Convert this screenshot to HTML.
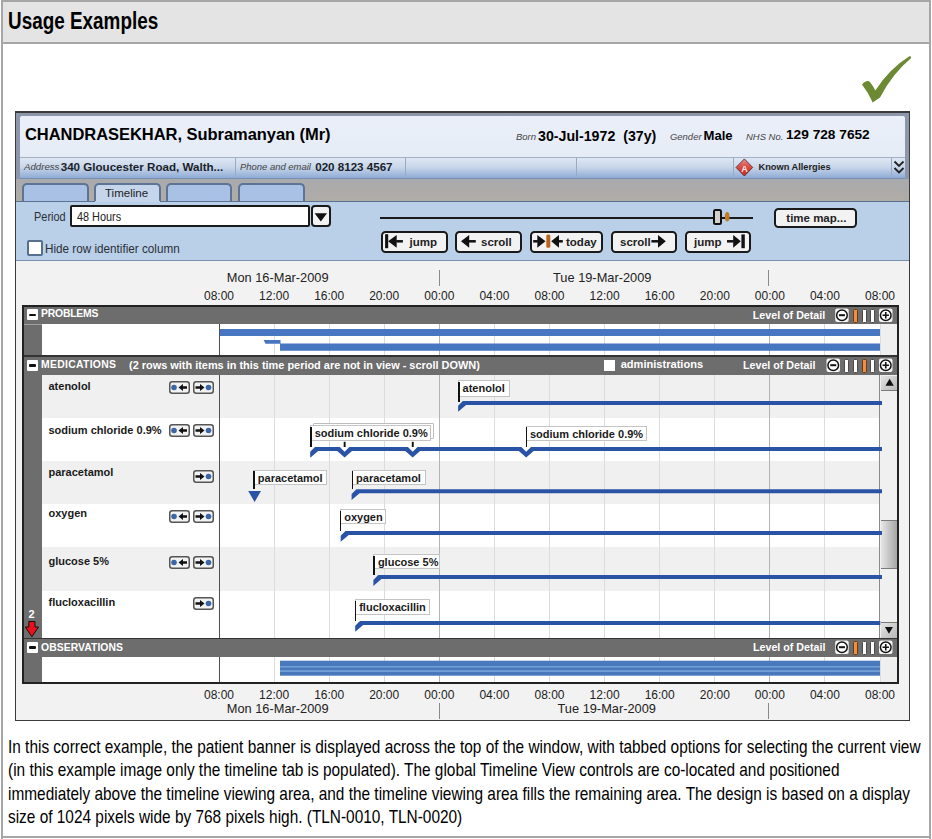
<!DOCTYPE html>
<html><head><meta charset="utf-8">
<style>
*{margin:0;padding:0;box-sizing:border-box}
html,body{width:932px;height:839px;overflow:hidden;background:#fff;font-family:"Liberation Sans",sans-serif;color:#000}
.a{position:absolute}
.t{position:absolute;white-space:nowrap;line-height:1}
.b{font-weight:bold}
.i{font-style:italic}
</style></head><body>
<!-- page frame -->
<div class="a" style="left:1px;top:0;width:930px;height:839px;border:2px solid #a6a6a6;border-bottom:none"></div>
<div class="a" style="left:1px;top:836px;width:930px;height:2px;background:#a6a6a6"></div>
<div class="a" style="left:3px;top:2px;width:926px;height:40px;background:#e4e4e4"></div>
<div class="a" style="left:3px;top:42px;width:926px;height:2px;background:#a6a6a6"></div>
<div class="t b" style="left:8.3px;top:8.5px;font-size:24.8px;transform:scaleX(0.762);transform-origin:0 0">Usage Examples</div>

<!-- checkmark -->
<svg class="a" style="left:850px;top:45px" width="70" height="65" viewBox="850 45 70 65">
<path d="M862 84.5 Q865 80.5 868.5 81 Q871 82 875.3 90.5 Q889 69 909.3 56.2 Q911.8 55.8 911 58.3 Q893 73 880 97.4 L872.7 102.5 Q868 92 862 84.5Z" fill="#6c8a33"/>
</svg>

<!-- main panel -->
<div class="a" style="left:15px;top:111px;width:895px;height:610px;background:#f0f0f0;border:1px solid #3a3a3a;border-top-width:2px"></div>
<!-- banner outer gray-blue -->
<div class="a" style="left:16px;top:113px;width:893px;height:66px;background:#8e97a9"></div>
<div class="a" style="left:20px;top:116px;width:885px;height:41px;background:linear-gradient(#eaeff9,#e6ecf6);border-radius:2px 2px 0 0"></div>
<div class="t b" style="left:25px;top:126px;font-size:16.5px;letter-spacing:-0.05px">CHANDRASEKHAR, Subramanyan (Mr)</div>
<div class="t i" style="left:515.5px;top:131.7px;font-size:9.8px;transform:scaleX(0.97);transform-origin:0 0;color:#444">Born</div>
<div class="t b" style="left:538px;top:128.5px;font-size:14.2px">30-Jul-1972&nbsp; (37y)</div>
<div class="t i" style="left:670px;top:131.7px;font-size:9.8px;transform:scaleX(0.965);transform-origin:0 0;color:#444">Gender</div>
<div class="t b" style="left:703.5px;top:128.9px;font-size:13.1px">Male</div>
<div class="t i" style="left:746px;top:131.7px;font-size:9.8px;transform:scaleX(0.965);transform-origin:0 0;color:#444">NHS No.</div>
<div class="t b" style="left:786px;top:128.4px;font-size:13.7px">129 728 7652</div>

<!-- address row -->
<div class="a" style="left:20px;top:157px;width:885px;height:22px;background:linear-gradient(#dde7f3,#c9d7ea 45%,#8fabd6);border-top:1px solid #a3b0c6;border-bottom:1px solid #7890b0"></div>
<div class="a" style="left:235px;top:158px;width:1px;height:20px;background:#9aaac2"></div>
<div class="a" style="left:405px;top:158px;width:1px;height:20px;background:#9aaac2"></div>
<div class="a" style="left:576px;top:158px;width:1px;height:20px;background:#9aaac2"></div>
<div class="a" style="left:733px;top:158px;width:1px;height:20px;background:#9aaac2"></div>
<div class="a" style="left:891px;top:158px;width:1px;height:20px;background:#9aaac2"></div>
<div class="t i" style="left:24.3px;top:162.2px;font-size:9.8px;transform:scaleX(0.985);transform-origin:0 0;color:#444">Address</div>
<div class="t b" style="left:60.7px;top:160.8px;font-size:11.6px;color:#1a1f2a">340 Gloucester Road, Walth...</div>
<div class="t i" style="left:240.2px;top:162.2px;font-size:9.8px;transform:scaleX(0.965);transform-origin:0 0;color:#444">Phone and email</div>
<div class="t b" style="left:315.2px;top:160.8px;font-size:11.6px;color:#1a1f2a">020 8123 4567</div>
<svg class="a" style="left:0;top:0" width="932" height="839"><defs><linearGradient id="dg" x1="0" y1="0" x2="0" y2="1"><stop offset="0" stop-color="#e88a8a"/><stop offset="0.55" stop-color="#d8443a"/><stop offset="1" stop-color="#d12a1c"/></linearGradient></defs>
<path d="M744.4 158.9 L752.7 167.4 L744.4 176 L736 167.4Z" fill="url(#dg)" stroke="#5a3030" stroke-width="0.9"/>
<text x="744.4" y="171.6" font-family="Liberation Sans" font-weight="bold" font-size="9" fill="#fbe6e6" text-anchor="middle">A</text>
</svg>
<div class="t b" style="left:758.5px;top:163px;font-size:9.25px;color:#222">Known Allergies</div>
<svg class="a" style="left:893px;top:160px" width="12" height="15" viewBox="0 0 12 15">
<path d="M1.5 1.5 L6 6 L10.5 1.5 M1.5 8 L6 12.5 L10.5 8" fill="none" stroke="#222" stroke-width="1.8"/>
</svg>

<!-- tab strip -->
<div class="a" style="left:16px;top:179px;width:893px;height:22px;background:linear-gradient(#a9aaae,#b0aca6)"></div>
<div class="a" style="left:22px;top:183.3px;width:67px;height:18.7px;background:#a8c1e4;border:2px solid #5d7494;border-bottom:none;border-radius:5px 5px 0 0"></div>
<div class="a" style="left:94px;top:183.3px;width:67px;height:18.7px;background:#c4d5ec;border:2px solid #5d7494;border-bottom:none;border-radius:5px 5px 0 0"></div>
<div class="a" style="left:166px;top:183.3px;width:66px;height:18.7px;background:#a8c1e4;border:2px solid #5d7494;border-bottom:none;border-radius:5px 5px 0 0"></div>
<div class="a" style="left:238px;top:183.3px;width:67px;height:18.7px;background:#a8c1e4;border:2px solid #5d7494;border-bottom:none;border-radius:5px 5px 0 0"></div>
<div class="t" style="left:105px;top:187.8px;font-size:11.5px;color:#222">Timeline</div>

<!-- control panel -->
<div class="a" style="left:16px;top:201px;width:893px;height:60px;background:#bacfe8;border-top:1px solid #5a7090;border-bottom:1px solid #7a90b0"></div>
<div class="a" style="left:95px;top:201px;width:65px;height:1px;background:#c4d5ec"></div>
<div class="t" style="left:34.2px;top:212px;font-size:11.9px;transform:scaleX(0.92);transform-origin:0 0;color:#2a3038">Period</div>
<div class="a" style="left:69.8px;top:205.2px;width:240.2px;height:21.4px;background:#fff;border:2px solid #1a1a1a;border-radius:2px"></div>
<div class="t" style="left:77.2px;top:212px;font-size:11.9px;transform:scaleX(0.915);transform-origin:0 0;color:#222">48 Hours</div>
<div class="a" style="left:311px;top:205.2px;width:19.5px;height:21.8px;background:#f2f2f2;border:2px solid #1a1a1a;border-radius:4px"></div>
<svg class="a" style="left:0;top:0" width="932" height="839"><path d="M314.6 213.2 L327 213.2 L320.8 221.6Z" fill="#111"/></svg>
<div class="a" style="left:27px;top:240px;width:16px;height:16px;background:#fff;border:2px solid #56708f;border-radius:2px"></div>
<div class="t" style="left:45.3px;top:243.3px;font-size:12.1px;transform:scaleX(0.968);transform-origin:0 0;color:#2a3038">Hide row identifier column</div>

<!-- slider -->
<div class="a" style="left:380px;top:216.5px;width:373px;height:2px;background:#1a1a1a"></div>
<div class="a" style="left:713px;top:209.3px;width:9px;height:15.3px;background:#d4d0cc;border:2px solid #111;border-radius:2.5px"></div>
<svg class="a" style="left:0;top:0" width="932" height="839"><ellipse cx="727.2" cy="216.7" rx="2.3" ry="4.7" fill="#c47a1e"/></svg>
<!-- time map -->
<div class="a" style="left:774.2px;top:207.9px;width:82.7px;height:20.5px;background:#f2f2f2;border:2px solid #1a1a1a;border-radius:4.5px"></div>
<div class="t b" style="left:786.3px;top:213px;font-size:11.5px;color:#222">time map...</div>

<!-- nav buttons -->
<div class="a" style="left:381px;top:231px;width:67px;height:22px;background:#f2f2f2;border:2px solid #1a1a1a;border-radius:4.5px"></div>
<div class="a" style="left:455px;top:231px;width:67px;height:22px;background:#f2f2f2;border:2px solid #1a1a1a;border-radius:4.5px"></div>
<div class="a" style="left:529.5px;top:231px;width:73px;height:22px;background:#f2f2f2;border:2px solid #1a1a1a;border-radius:4.5px"></div>
<div class="a" style="left:610.5px;top:231px;width:66px;height:22px;background:#f2f2f2;border:2px solid #1a1a1a;border-radius:4.5px"></div>
<div class="a" style="left:684.5px;top:231px;width:66px;height:22px;background:#f2f2f2;border:2px solid #1a1a1a;border-radius:4.5px"></div>
<svg class="a" style="left:0;top:0" width="932" height="839"><rect x="385.1" y="234.2" width="3.1" height="14" fill="#111"/><path d="M388.1 241.3 L396.7 234.9 L396.7 247.70000000000002Z" fill="#111"/><rect x="396.2" y="240.05" width="6.699999999999989" height="2.5" fill="#111"/><path d="M461 241.3 L469.2 234.9 L469.2 247.70000000000002Z" fill="#111"/><rect x="468.7" y="240.05" width="7.100000000000023" height="2.5" fill="#111"/><path d="M545.5 241.3 L537.3 234.9 L537.3 247.70000000000002Z" fill="#111"/><rect x="533.2" y="240.05" width="4.599999999999909" height="2.5" fill="#111"/><rect x="546.3" y="234.4" width="4" height="13.3" rx="1.5" fill="#b8661e"/><path d="M551.2 241.3 L559 234.9 L559 247.70000000000002Z" fill="#111"/><rect x="558.5" y="240.05" width="4.2999999999999545" height="2.5" fill="#111"/><path d="M665.8 241.3 L658 234.9 L658 247.70000000000002Z" fill="#111"/><rect x="651.4" y="240.05" width="7.100000000000023" height="2.5" fill="#111"/><path d="M740.8 241.3 L733.2 234.9 L733.2 247.70000000000002Z" fill="#111"/><rect x="727" y="240.05" width="6.7000000000000455" height="2.5" fill="#111"/><rect x="741.4" y="234.4" width="3.4" height="13.8" fill="#111"/></svg>
<div class="t b" style="left:409.5px;top:236.8px;font-size:11.5px;color:#222">jump</div>
<div class="t b" style="left:481px;top:236.8px;font-size:11.5px;color:#222">scroll</div>
<div class="t b" style="left:566px;top:236.8px;font-size:11.5px;color:#222">today</div>
<div class="t b" style="left:620px;top:236.8px;font-size:11.5px;color:#222">scroll</div>
<div class="t b" style="left:694px;top:236.8px;font-size:11.5px;color:#222">jump</div>

<!-- TIMELINE -->
<div class="a" style="left:16px;top:261px;width:893px;height:459px;background:#f2f2f2"></div>
<div class="t" style="left:226.8px;top:272.3px;font-size:12.8px;color:#222">Mon 16-Mar-2009</div>
<div class="t" style="left:553px;top:272.3px;font-size:12.8px;color:#222">Tue 19-Mar-2009</div>
<div class="a" style="left:439px;top:270px;width:1px;height:16px;background:#8a8a8a"></div>
<div class="a" style="left:768px;top:270px;width:1px;height:16px;background:#8a8a8a"></div>
<div class="t" style="left:199.0px;width:40px;text-align:center;top:289.5px;font-size:12px;color:#222">08:00</div>
<div class="t" style="left:254.1px;width:40px;text-align:center;top:289.5px;font-size:12px;color:#222">12:00</div>
<div class="t" style="left:309.2px;width:40px;text-align:center;top:289.5px;font-size:12px;color:#222">16:00</div>
<div class="t" style="left:364.2px;width:40px;text-align:center;top:289.5px;font-size:12px;color:#222">20:00</div>
<div class="t" style="left:419.3px;width:40px;text-align:center;top:289.5px;font-size:12px;color:#222">00:00</div>
<div class="t" style="left:474.4px;width:40px;text-align:center;top:289.5px;font-size:12px;color:#222">04:00</div>
<div class="t" style="left:529.5px;width:40px;text-align:center;top:289.5px;font-size:12px;color:#222">08:00</div>
<div class="t" style="left:584.6px;width:40px;text-align:center;top:289.5px;font-size:12px;color:#222">12:00</div>
<div class="t" style="left:639.7px;width:40px;text-align:center;top:289.5px;font-size:12px;color:#222">16:00</div>
<div class="t" style="left:694.8px;width:40px;text-align:center;top:289.5px;font-size:12px;color:#222">20:00</div>
<div class="t" style="left:749.8px;width:40px;text-align:center;top:289.5px;font-size:12px;color:#222">00:00</div>
<div class="t" style="left:804.9px;width:40px;text-align:center;top:289.5px;font-size:12px;color:#222">04:00</div>
<div class="t" style="left:860.0px;width:40px;text-align:center;top:289.5px;font-size:12px;color:#222">08:00</div>
<div class="t" style="left:226.8px;top:703.0px;font-size:12.8px;color:#222">Mon 16-Mar-2009</div>
<div class="t" style="left:557.5px;top:703.0px;font-size:12.8px;color:#222">Tue 19-Mar-2009</div>
<div class="a" style="left:439px;top:703px;width:1px;height:16px;background:#8a8a8a"></div>
<div class="a" style="left:768px;top:703px;width:1px;height:16px;background:#8a8a8a"></div>
<div class="t" style="left:199.0px;width:40px;text-align:center;top:688.5px;font-size:12px;color:#222">08:00</div>
<div class="t" style="left:254.1px;width:40px;text-align:center;top:688.5px;font-size:12px;color:#222">12:00</div>
<div class="t" style="left:309.2px;width:40px;text-align:center;top:688.5px;font-size:12px;color:#222">16:00</div>
<div class="t" style="left:364.2px;width:40px;text-align:center;top:688.5px;font-size:12px;color:#222">20:00</div>
<div class="t" style="left:419.3px;width:40px;text-align:center;top:688.5px;font-size:12px;color:#222">00:00</div>
<div class="t" style="left:474.4px;width:40px;text-align:center;top:688.5px;font-size:12px;color:#222">04:00</div>
<div class="t" style="left:529.5px;width:40px;text-align:center;top:688.5px;font-size:12px;color:#222">08:00</div>
<div class="t" style="left:584.6px;width:40px;text-align:center;top:688.5px;font-size:12px;color:#222">12:00</div>
<div class="t" style="left:639.7px;width:40px;text-align:center;top:688.5px;font-size:12px;color:#222">16:00</div>
<div class="t" style="left:694.8px;width:40px;text-align:center;top:688.5px;font-size:12px;color:#222">20:00</div>
<div class="t" style="left:749.8px;width:40px;text-align:center;top:688.5px;font-size:12px;color:#222">00:00</div>
<div class="t" style="left:804.9px;width:40px;text-align:center;top:688.5px;font-size:12px;color:#222">04:00</div>
<div class="t" style="left:860.0px;width:40px;text-align:center;top:688.5px;font-size:12px;color:#222">08:00</div>
<div class="a" style="left:22px;top:305px;width:877px;height:379px;background:#6d6d6d;border:2px solid #222"></div>
<div class="a" style="left:24px;top:307px;width:873px;height:17px;background:#6d6d6d"></div>
<div class="a" style="left:27.3px;top:309.2px;width:10.8px;height:10.8px;background:#fff;border-radius:1px"></div>
<div class="a" style="left:29.2px;top:313.59999999999997px;width:7.2px;height:2.2px;background:#111;border-radius:1px"></div>
<div class="t b" style="left:41px;top:309.2px;font-size:10.4px;letter-spacing:-0.2px;color:#fff">PROBLEMS</div>

<div class="a" style="left:24px;top:324px;width:18px;height:1px;background:#a0a0a0"></div>
<div class="a" style="left:42px;top:324px;width:838px;height:31px;background:#fff"></div>
<div class="a" style="left:880px;top:324px;width:17px;height:31px;background:#efefef;border-left:1px solid #ddd"></div>
<div class="a" style="left:24px;top:355px;width:873px;height:2px;background:#333"></div>
<div class="a" style="left:24px;top:357px;width:873px;height:18px;background:#6d6d6d"></div>
<div class="a" style="left:27.3px;top:360px;width:10.8px;height:10.8px;background:#fff;border-radius:1px"></div>
<div class="a" style="left:29.2px;top:364.4px;width:7.2px;height:2.2px;background:#111;border-radius:1px"></div>
<div class="t b" style="left:41px;top:360.4px;font-size:10.4px;letter-spacing:0.3px;color:#fff">MEDICATIONS</div>

<div class="t b" style="left:129px;top:359.6px;font-size:10.93px;color:#fff">(2 rows with items in this time period are not in view - scroll DOWN)</div>
<div class="a" style="left:604px;top:360px;width:11px;height:11px;background:#fff"></div>
<div class="t b" style="left:620.7px;top:359.4px;font-size:11.07px;color:#fff">administrations</div>
<div class="a" style="left:42px;top:375px;width:838px;height:43px;background:#f0f0f0"></div>
<div class="a" style="left:42px;top:418px;width:838px;height:43px;background:#fff"></div>
<div class="a" style="left:42px;top:461px;width:838px;height:43px;background:#f0f0f0"></div>
<div class="a" style="left:42px;top:504px;width:838px;height:43px;background:#fff"></div>
<div class="a" style="left:42px;top:547px;width:838px;height:44px;background:#f0f0f0"></div>
<div class="a" style="left:42px;top:591px;width:838px;height:47px;background:#fff"></div>
<div class="a" style="left:879.3px;top:375px;width:17.5px;height:263px;background:#f0f0f0;border-left:1.5px solid #8a8a8a"></div>
<div class="a" style="left:880.7px;top:375.6px;width:16px;height:15px;background:linear-gradient(135deg,#e4e4e4,#b8b8b8);border-bottom:1.5px solid #7a7a7a"></div>
<svg class="a" style="left:0;top:0" width="932" height="839"><path d="M885.4 385.8 L893.8 385.8 L889.6 378.8Z" fill="#111"/></svg>
<div class="a" style="left:880.7px;top:622px;width:16px;height:16.3px;background:linear-gradient(135deg,#e4e4e4,#b8b8b8);border-top:1.5px solid #7a7a7a"></div>
<svg class="a" style="left:0;top:0" width="932" height="839"><path d="M885 627 L892.9 627 L888.95 633.8Z" fill="#111"/></svg>
<div class="a" style="left:880.7px;top:520.2px;width:16px;height:48.8px;background:linear-gradient(90deg,#e6e6e6,#a6a6a6);border-top:1.5px solid #7a7a7a;border-bottom:1.5px solid #7a7a7a"></div>
<div class="a" style="left:24px;top:638px;width:873px;height:1px;background:#333"></div>
<div class="a" style="left:24px;top:639px;width:873px;height:18px;background:#6d6d6d"></div>
<div class="a" style="left:27.3px;top:642px;width:10.8px;height:10.8px;background:#fff;border-radius:1px"></div>
<div class="a" style="left:29.2px;top:646.4px;width:7.2px;height:2.2px;background:#111;border-radius:1px"></div>
<div class="t b" style="left:41px;top:643.2px;font-size:10.4px;letter-spacing:0.05px;color:#fff">OBSERVATIONS</div>

<div class="a" style="left:42px;top:657px;width:838px;height:25px;background:#fff"></div>
<div class="a" style="left:880px;top:657px;width:17px;height:25px;background:#efefef;border-left:1px solid #ddd"></div>
<div class="a" style="left:274px;top:324px;width:1px;height:31px;background:#dcdcdc"></div>
<div class="a" style="left:274px;top:375px;width:1px;height:263px;background:#dcdcdc"></div>
<div class="a" style="left:274px;top:657px;width:1px;height:25px;background:#dcdcdc"></div>
<div class="a" style="left:329px;top:324px;width:1px;height:31px;background:#dcdcdc"></div>
<div class="a" style="left:329px;top:375px;width:1px;height:263px;background:#dcdcdc"></div>
<div class="a" style="left:329px;top:657px;width:1px;height:25px;background:#dcdcdc"></div>
<div class="a" style="left:384px;top:324px;width:1px;height:31px;background:#dcdcdc"></div>
<div class="a" style="left:384px;top:375px;width:1px;height:263px;background:#dcdcdc"></div>
<div class="a" style="left:384px;top:657px;width:1px;height:25px;background:#dcdcdc"></div>
<div class="a" style="left:439px;top:324px;width:1px;height:31px;background:#b4b4b4"></div>
<div class="a" style="left:439px;top:375px;width:1px;height:263px;background:#b4b4b4"></div>
<div class="a" style="left:439px;top:657px;width:1px;height:25px;background:#b4b4b4"></div>
<div class="a" style="left:494px;top:324px;width:1px;height:31px;background:#dcdcdc"></div>
<div class="a" style="left:494px;top:375px;width:1px;height:263px;background:#dcdcdc"></div>
<div class="a" style="left:494px;top:657px;width:1px;height:25px;background:#dcdcdc"></div>
<div class="a" style="left:549px;top:324px;width:1px;height:31px;background:#dcdcdc"></div>
<div class="a" style="left:549px;top:375px;width:1px;height:263px;background:#dcdcdc"></div>
<div class="a" style="left:549px;top:657px;width:1px;height:25px;background:#dcdcdc"></div>
<div class="a" style="left:604px;top:324px;width:1px;height:31px;background:#dcdcdc"></div>
<div class="a" style="left:604px;top:375px;width:1px;height:263px;background:#dcdcdc"></div>
<div class="a" style="left:604px;top:657px;width:1px;height:25px;background:#dcdcdc"></div>
<div class="a" style="left:659px;top:324px;width:1px;height:31px;background:#dcdcdc"></div>
<div class="a" style="left:659px;top:375px;width:1px;height:263px;background:#dcdcdc"></div>
<div class="a" style="left:659px;top:657px;width:1px;height:25px;background:#dcdcdc"></div>
<div class="a" style="left:714px;top:324px;width:1px;height:31px;background:#dcdcdc"></div>
<div class="a" style="left:714px;top:375px;width:1px;height:263px;background:#dcdcdc"></div>
<div class="a" style="left:714px;top:657px;width:1px;height:25px;background:#dcdcdc"></div>
<div class="a" style="left:769px;top:324px;width:1px;height:31px;background:#b4b4b4"></div>
<div class="a" style="left:769px;top:375px;width:1px;height:263px;background:#b4b4b4"></div>
<div class="a" style="left:769px;top:657px;width:1px;height:25px;background:#b4b4b4"></div>
<div class="a" style="left:824px;top:324px;width:1px;height:31px;background:#dcdcdc"></div>
<div class="a" style="left:824px;top:375px;width:1px;height:263px;background:#dcdcdc"></div>
<div class="a" style="left:824px;top:657px;width:1px;height:25px;background:#dcdcdc"></div>
<div class="a" style="left:218.5px;top:324px;width:1.6px;height:31px;background:#505050"></div>
<div class="a" style="left:218.5px;top:375px;width:1.6px;height:263px;background:#505050"></div>
<div class="a" style="left:218.5px;top:657px;width:1.6px;height:25px;background:#505050"></div>
<div class="t b" style="left:752.8px;top:309.9px;font-size:10.7px;color:#fff">Level of Detail</div>
<svg class="a" style="left:0;top:0" width="932" height="839"><rect x="835.2" y="308.5" width="13.5" height="13.5" rx="2" fill="#f4f4f4"/><circle cx="841.95" cy="315.2" r="5.3" fill="#fff" stroke="#111" stroke-width="1.5"/><path d="M838.95 315.2 H844.95" stroke="#111" stroke-width="2"/></svg>
<svg class="a" style="left:0;top:0" width="932" height="839"><rect x="879" y="308.5" width="13.5" height="13.5" rx="2" fill="#f4f4f4"/><circle cx="885.75" cy="315.2" r="5.3" fill="#fff" stroke="#111" stroke-width="1.5"/><path d="M882.55 315.2 H888.95 M885.75 312.0 V318.4" stroke="#111" stroke-width="1.6"/></svg>
<div class="a" style="left:852.8px;top:308.5px;width:5.2px;height:14.3px;background:#ee8f48;border-radius:1.5px;border:1px solid #6a3a10"></div>
<div class="a" style="left:861.8px;top:308.5px;width:5.2px;height:14.3px;background:#fff;border-radius:1.5px;border:1px solid #4a4a4a"></div>
<div class="a" style="left:870.3px;top:308.5px;width:5.2px;height:14.3px;background:#fff;border-radius:1.5px;border:1px solid #4a4a4a"></div>
<div class="t b" style="left:743px;top:359.9px;font-size:10.7px;color:#fff">Level of Detail</div>
<svg class="a" style="left:0;top:0" width="932" height="839"><rect x="826.5" y="358.5" width="13.5" height="13.5" rx="2" fill="#f4f4f4"/><circle cx="833.25" cy="365.2" r="5.3" fill="#fff" stroke="#111" stroke-width="1.5"/><path d="M830.25 365.2 H836.25" stroke="#111" stroke-width="2"/></svg>
<svg class="a" style="left:0;top:0" width="932" height="839"><rect x="879" y="358.5" width="13.5" height="13.5" rx="2" fill="#f4f4f4"/><circle cx="885.75" cy="365.2" r="5.3" fill="#fff" stroke="#111" stroke-width="1.5"/><path d="M882.55 365.2 H888.95 M885.75 362.0 V368.4" stroke="#111" stroke-width="1.6"/></svg>
<div class="a" style="left:844.1px;top:358.5px;width:5.2px;height:14.3px;background:#fff;border-radius:1.5px;border:1px solid #4a4a4a"></div>
<div class="a" style="left:853.1px;top:358.5px;width:5.2px;height:14.3px;background:#fff;border-radius:1.5px;border:1px solid #4a4a4a"></div>
<div class="a" style="left:861.5px;top:358.5px;width:5.2px;height:14.3px;background:#ee8f48;border-radius:1.5px;border:1px solid #6a3a10"></div>
<div class="a" style="left:870.3px;top:358.5px;width:5.2px;height:14.3px;background:#fff;border-radius:1.5px;border:1px solid #4a4a4a"></div>
<div class="t b" style="left:753px;top:641.9px;font-size:10.7px;color:#fff">Level of Detail</div>
<svg class="a" style="left:0;top:0" width="932" height="839"><rect x="835.2" y="640.5" width="13.5" height="13.5" rx="2" fill="#f4f4f4"/><circle cx="841.95" cy="647.2" r="5.3" fill="#fff" stroke="#111" stroke-width="1.5"/><path d="M838.95 647.2 H844.95" stroke="#111" stroke-width="2"/></svg>
<svg class="a" style="left:0;top:0" width="932" height="839"><rect x="879" y="640.5" width="13.5" height="13.5" rx="2" fill="#f4f4f4"/><circle cx="885.75" cy="647.2" r="5.3" fill="#fff" stroke="#111" stroke-width="1.5"/><path d="M882.55 647.2 H888.95 M885.75 644.0 V650.4000000000001" stroke="#111" stroke-width="1.6"/></svg>
<div class="a" style="left:852.8px;top:640.5px;width:5.2px;height:14.3px;background:#ee8f48;border-radius:1.5px;border:1px solid #6a3a10"></div>
<div class="a" style="left:861.8px;top:640.5px;width:5.2px;height:14.3px;background:#fff;border-radius:1.5px;border:1px solid #4a4a4a"></div>
<div class="a" style="left:870.3px;top:640.5px;width:5.2px;height:14.3px;background:#fff;border-radius:1.5px;border:1px solid #4a4a4a"></div>
<div class="t b" style="left:48.5px;top:381px;font-size:11px;color:#1a1a1a">atenolol</div>
<svg class="a" style="left:0;top:0" width="932" height="839"><rect x="169.75" y="381.75" width="19.5" height="11.5" rx="2.5" fill="#f2f2f2" stroke="#555" stroke-width="1.5"/><circle cx="174" cy="387.5" r="2.8" fill="#3b66a8"/><path d="M178.5 387.5 L183 383.9 V386.3 H187 V388.7 H183 V391.1Z" fill="#111"/></svg>
<svg class="a" style="left:0;top:0" width="932" height="839"><rect x="193.75" y="381.75" width="19.5" height="11.5" rx="2.5" fill="#f2f2f2" stroke="#555" stroke-width="1.5"/><path d="M195.5 386.3 H200 V383.9 L204.5 387.5 L200 391.1 V388.7 H195.5Z" fill="#111"/><circle cx="208.5" cy="387.5" r="2.8" fill="#3b66a8"/></svg>
<div class="t b" style="left:48.5px;top:424.5px;font-size:11px;color:#1a1a1a">sodium chloride 0.9%</div>
<svg class="a" style="left:0;top:0" width="932" height="839"><rect x="169.75" y="424.75" width="19.5" height="11.5" rx="2.5" fill="#f2f2f2" stroke="#555" stroke-width="1.5"/><circle cx="174" cy="430.5" r="2.8" fill="#3b66a8"/><path d="M178.5 430.5 L183 426.9 V429.3 H187 V431.7 H183 V434.1Z" fill="#111"/></svg>
<svg class="a" style="left:0;top:0" width="932" height="839"><rect x="193.75" y="424.75" width="19.5" height="11.5" rx="2.5" fill="#f2f2f2" stroke="#555" stroke-width="1.5"/><path d="M195.5 429.3 H200 V426.9 L204.5 430.5 L200 434.1 V431.7 H195.5Z" fill="#111"/><circle cx="208.5" cy="430.5" r="2.8" fill="#3b66a8"/></svg>
<div class="t b" style="left:48.5px;top:466.5px;font-size:11px;color:#1a1a1a">paracetamol</div>
<svg class="a" style="left:0;top:0" width="932" height="839"><rect x="193.75" y="470.75" width="19.5" height="11.5" rx="2.5" fill="#f2f2f2" stroke="#555" stroke-width="1.5"/><path d="M195.5 475.3 H200 V472.9 L204.5 476.5 L200 480.1 V477.7 H195.5Z" fill="#111"/><circle cx="208.5" cy="476.5" r="2.8" fill="#3b66a8"/></svg>
<div class="t b" style="left:48.5px;top:508px;font-size:11px;color:#1a1a1a">oxygen</div>
<svg class="a" style="left:0;top:0" width="932" height="839"><rect x="169.75" y="510.75" width="19.5" height="11.5" rx="2.5" fill="#f2f2f2" stroke="#555" stroke-width="1.5"/><circle cx="174" cy="516.5" r="2.8" fill="#3b66a8"/><path d="M178.5 516.5 L183 512.9 V515.3 H187 V517.7 H183 V520.1Z" fill="#111"/></svg>
<svg class="a" style="left:0;top:0" width="932" height="839"><rect x="193.75" y="510.75" width="19.5" height="11.5" rx="2.5" fill="#f2f2f2" stroke="#555" stroke-width="1.5"/><path d="M195.5 515.3 H200 V512.9 L204.5 516.5 L200 520.1 V517.7 H195.5Z" fill="#111"/><circle cx="208.5" cy="516.5" r="2.8" fill="#3b66a8"/></svg>
<div class="t b" style="left:48.5px;top:555.5px;font-size:11px;color:#1a1a1a">glucose 5%</div>
<svg class="a" style="left:0;top:0" width="932" height="839"><rect x="169.75" y="556.75" width="19.5" height="11.5" rx="2.5" fill="#f2f2f2" stroke="#555" stroke-width="1.5"/><circle cx="174" cy="562.5" r="2.8" fill="#3b66a8"/><path d="M178.5 562.5 L183 558.9 V561.3 H187 V563.7 H183 V566.1Z" fill="#111"/></svg>
<svg class="a" style="left:0;top:0" width="932" height="839"><rect x="193.75" y="556.75" width="19.5" height="11.5" rx="2.5" fill="#f2f2f2" stroke="#555" stroke-width="1.5"/><path d="M195.5 561.3 H200 V558.9 L204.5 562.5 L200 566.1 V563.7 H195.5Z" fill="#111"/><circle cx="208.5" cy="562.5" r="2.8" fill="#3b66a8"/></svg>
<div class="t b" style="left:48.5px;top:597px;font-size:11px;color:#1a1a1a">flucloxacillin</div>
<svg class="a" style="left:0;top:0" width="932" height="839"><rect x="193.75" y="597.75" width="19.5" height="11.5" rx="2.5" fill="#f2f2f2" stroke="#555" stroke-width="1.5"/><path d="M195.5 602.3 H200 V599.9 L204.5 603.5 L200 607.1 V604.7 H195.5Z" fill="#111"/><circle cx="208.5" cy="603.5" r="2.8" fill="#3b66a8"/></svg>
<div class="t b" style="left:28.6px;top:608.8px;font-size:11px;color:#fff">2</div>
<svg class="a" style="left:0;top:0" width="932" height="839"><path d="M28.8 621.5 H35 V627 H38.5 L31.9 636.8 L25.3 627 H28.8Z" fill="#e8101a" stroke="#111" stroke-width="1"/></svg>
<svg class="a" style="left:0;top:0" width="932" height="839"><rect x="220" y="329" width="660" height="7" fill="#4677c0"/><path d="M263.6 340 L280.5 340 L280.5 343.6 L880 343.6 L880 350.7 L280 350.7 L280 343.8 L265.5 343.8Z" fill="#4677c0"/><rect x="280" y="660.7" width="600" height="15" fill="#4a78bd"/><rect x="280" y="666" width="600" height="1.5" fill="#74a0d8"/><rect x="280" y="670.2" width="600" height="1.8" fill="#74a0d8"/><path d="M458.1 405.8 L462.9 401.0 L882.0 401.0 L882.0 405.0 L466.1 405.0 L458.1 411.8Z" fill="#2a53a6"/><path d="M310.2 451.7 L315.0 446.9 L339.8 446.9 L344.6 451.7 L349.4 446.9 L407.9 446.9 L412.7 451.7 L417.5 446.9 L521.4 446.9 L526.2 451.7 L531.0 446.9 L882.0 446.9 L882.0 450.9 L533.6 450.9 L526.2 457.5 L518.8 450.9 L420.1 450.9 L412.7 457.5 L405.3 450.9 L352.0 450.9 L344.6 457.5 L337.2 450.9 L318.2 450.9 L310.2 457.7Z" fill="#2a53a6"/><path d="M351.6 494.1 L356.4 489.3 L882.0 489.3 L882.0 493.3 L359.6 493.3 L351.6 500.1Z" fill="#2a53a6"/><path d="M340.7 535.7 L345.5 530.9 L882.0 530.9 L882.0 534.9 L348.7 534.9 L340.7 541.7Z" fill="#2a53a6"/><path d="M373.4 579.9 L378.2 575.1 L882.0 575.1 L882.0 579.1 L381.4 579.1 L373.4 585.9Z" fill="#2a53a6"/><path d="M355.2 625.8 L360.0 621.0 L880.3 621.0 L880.3 625.0 L363.2 625.0 L355.2 631.8Z" fill="#2a53a6"/><path d="M248.2 491 L261 491 L254.6 502.1Z" fill="#2a53a6"/><rect x="343.70000000000005" y="441.8" width="1.9" height="5.2" fill="#111"/><rect x="411.8" y="441.8" width="1.9" height="5.2" fill="#111"/></svg>
<div class="a" style="left:312.5px;top:423.3px;width:121.2px;height:15.5px;background:#fff;border:1px solid #bdbdbd;border-radius:1px"></div>
<div class="a" style="left:458.1px;top:380.3px;width:52.4px;height:16.5px;background:#fff;border:1px solid #c4c4c4"></div>
<div class="a" style="left:458.1px;top:382.1px;width:1.8px;height:19.6px;background:#111"></div>
<div class="t b" style="left:462.6px;top:383.3px;font-size:11px;color:#1a1a1a">atenolol</div>
<div class="a" style="left:310.2px;top:424.8px;width:120.8px;height:16.3px;background:#fff;border:1px solid #c4c4c4"></div>
<div class="a" style="left:310.2px;top:426.6px;width:1.8px;height:20.3px;background:#111"></div>
<div class="t b" style="left:314.7px;top:427.8px;font-size:11px;color:#1a1a1a">sodium chloride 0.9%</div>
<div class="a" style="left:525.5px;top:425.5px;width:121.1px;height:15.8px;background:#fff;border:1px solid #c4c4c4"></div>
<div class="a" style="left:525.5px;top:427.3px;width:1.8px;height:19.4px;background:#111"></div>
<div class="t b" style="left:530.0px;top:428.5px;font-size:11px;color:#1a1a1a">sodium chloride 0.9%</div>
<div class="a" style="left:253.3px;top:469.5px;width:73.6px;height:15px;background:#fff;border:1px solid #c4c4c4"></div>
<div class="a" style="left:253.3px;top:471.3px;width:1.8px;height:18.2px;background:#111"></div>
<div class="t b" style="left:257.8px;top:472.5px;font-size:11px;color:#1a1a1a">paracetamol</div>
<div class="a" style="left:351.6px;top:469.5px;width:74.0px;height:15px;background:#fff;border:1px solid #c4c4c4"></div>
<div class="a" style="left:351.6px;top:471.3px;width:1.8px;height:18.0px;background:#111"></div>
<div class="t b" style="left:356.1px;top:472.5px;font-size:11px;color:#1a1a1a">paracetamol</div>
<div class="a" style="left:339.7px;top:509.2px;width:46.3px;height:15px;background:#fff;border:1px solid #c4c4c4"></div>
<div class="a" style="left:339.7px;top:511.0px;width:1.8px;height:19.9px;background:#111"></div>
<div class="t b" style="left:344.2px;top:512.2px;font-size:11px;color:#1a1a1a">oxygen</div>
<div class="a" style="left:373.4px;top:553.8px;width:67.1px;height:15px;background:#fff;border:1px solid #c4c4c4"></div>
<div class="a" style="left:373.4px;top:555.6px;width:1.8px;height:19.5px;background:#111"></div>
<div class="t b" style="left:377.9px;top:556.8px;font-size:11px;color:#1a1a1a">glucose 5%</div>
<div class="a" style="left:354.7px;top:599.3px;width:75.8px;height:15.6px;background:#fff;border:1px solid #c4c4c4"></div>
<div class="a" style="left:354.7px;top:601.1px;width:1.8px;height:19.9px;background:#111"></div>
<div class="t b" style="left:359.2px;top:602.3px;font-size:11px;color:#1a1a1a">flucloxacillin</div>
<div class="t" style="left:7.5px;top:736.9px;font-size:19px;transform:scaleX(0.8105);transform-origin:0 0;color:#000">In this correct example, the patient banner is displayed across the top of the window, with tabbed options for selecting the current view</div>
<div class="t" style="left:7.5px;top:760.4px;font-size:19px;transform:scaleX(0.8105);transform-origin:0 0;color:#000">(in this example image only the timeline tab is populated). The global Timeline View controls are co-located and positioned</div>
<div class="t" style="left:7.5px;top:783.8px;font-size:19px;transform:scaleX(0.8105);transform-origin:0 0;color:#000">immediately above the timeline viewing area, and the timeline viewing area fills the remaining area. The design is based on a display</div>
<div class="t" style="left:7.5px;top:807.2px;font-size:19px;transform:scaleX(0.8105);transform-origin:0 0;color:#000">size of 1024 pixels wide by 768 pixels high. (TLN-0010, TLN-0020)</div>
</body></html>
